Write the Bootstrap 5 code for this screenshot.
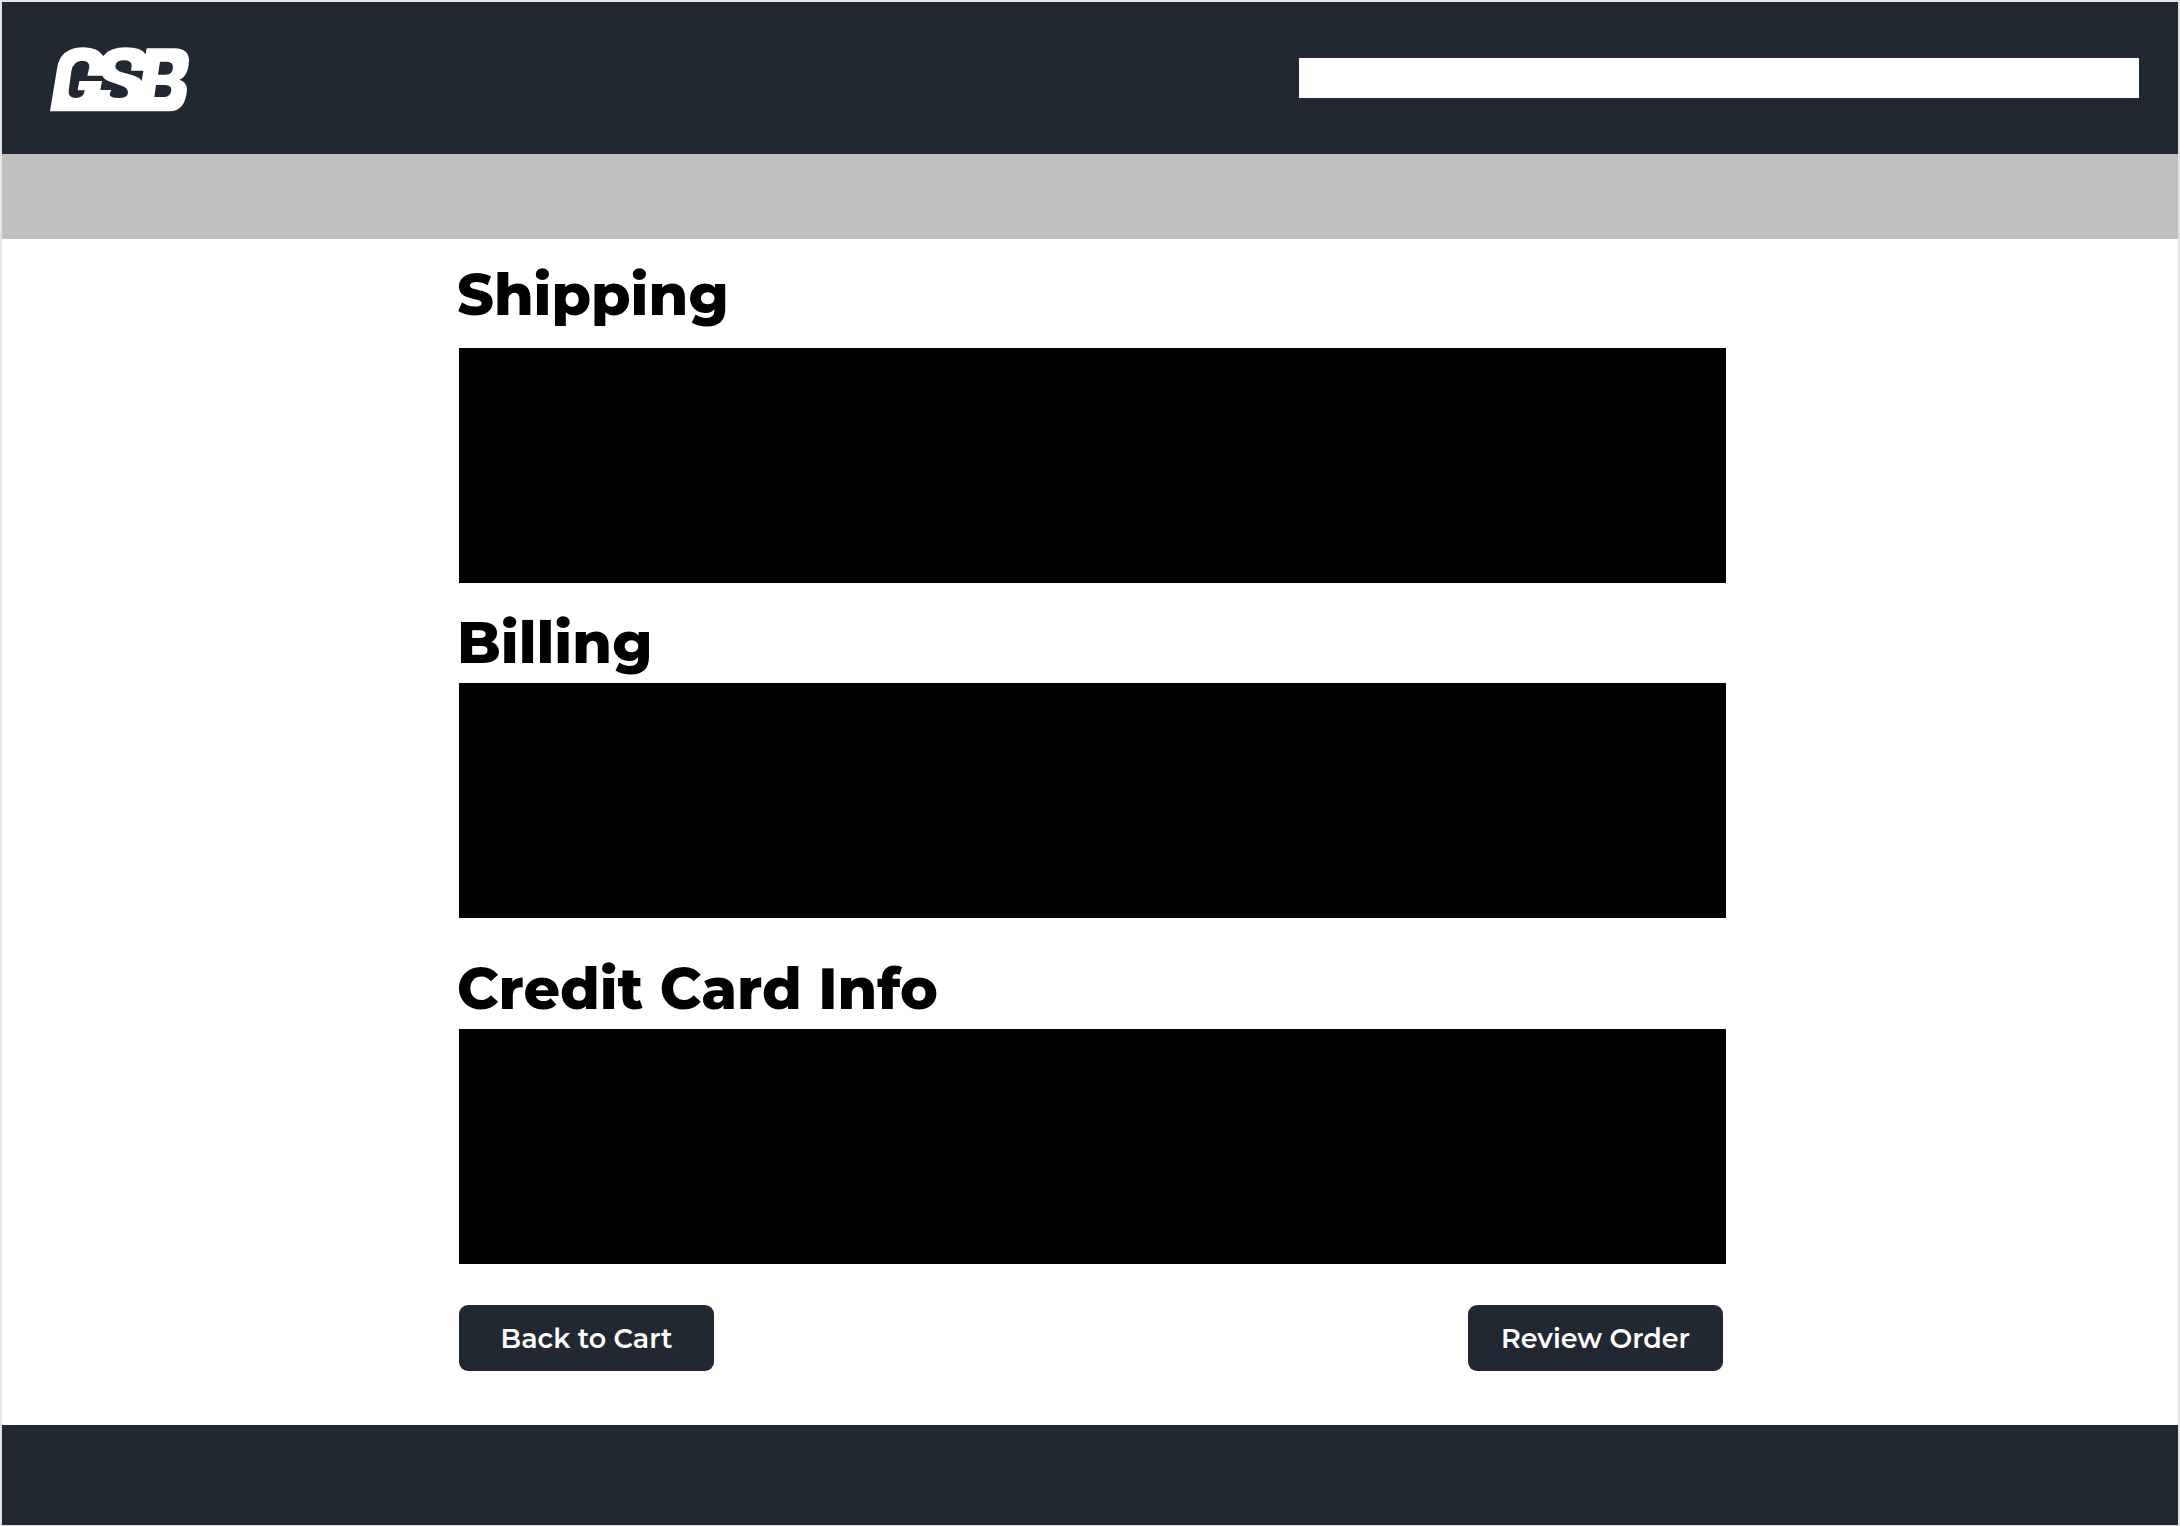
<!DOCTYPE html>
<html lang="en">
<head>
<meta charset="utf-8">
<meta name="viewport" content="width=device-width, initial-scale=1">
<title>GSB Checkout</title>
<link href="https://cdn.jsdelivr.net/npm/bootstrap@5.3.0/dist/css/bootstrap.min.css" rel="stylesheet">
<style>
  :root { --navy: #222831; }
  body { font-family: Montserrat, Inter, sans-serif; color: #000; background: #fff; }
  .page-frame { border: 2px solid #e2e4e6; border-bottom-width: 1px; }
  .site-header { background: var(--navy); height: 152px; padding: 0 39px 0 48px; }
  .brand-link { padding-top: 2px; }
  .search-box { width: 840px; height: 40px; border: 0; border-radius: 0; }
  .sub-bar { background: #c0c0c0; height: 85px; }
  .checkout { padding-left: 5px; }
  .checkout-inner { max-width: 1267px; }
  .section-title { font-size: 57px; line-height: 64px; font-weight: 800; margin-left: -2px; }
  .section-title.first-title { margin-bottom: 21px; }
  .billing-section { padding-top: 28px; }
  .card-section { padding-top: 39px; }
  .panel { height: 235px; background: #000; }
  .action-row { padding: 41px 3px 0 0; }
  .btn-navy { width: 255px; height: 66px; border: 0; border-radius: 9px; padding: 8px 12px 6px; font-size: 27px; font-weight: 600; line-height: 36px; --bs-btn-color: #fff; --bs-btn-bg: var(--navy); --bs-btn-hover-color: #fff; --bs-btn-hover-bg: #39424f; }
  .site-footer { background: var(--navy); height: 100px; }
</style>
</head>
<body>
<div class="page-frame d-flex flex-column min-vh-100">
  <header class="site-header d-flex align-items-center justify-content-between">
    <a class="brand-link" href="#" aria-label="GSB home">
      <svg class="d-block" width="140" height="65" viewBox="30 35 420 195" aria-hidden="true">
        <path fill="#fff" fill-rule="evenodd" d="M30 228L51 100Q60 36 132 36Q174 37 190 62Q208 36 258 36Q305 36 317 57L320 39H405Q447 40 447 76Q445 122 418 133Q441 140 441 162Q437 228 388 228Z
        M127 76Q148 76 148 95L142 121H187Q192 133 215 141L245 151Q264 157 264 172Q263 188 237 188Q208 188 209 175L214 164H181L186 137H118L113 165H134Q132 188 107 188Q84 187 86 166L94 108Q99 76 127 76Z
        M252 75Q276 75 275 92L273 106H310L305 137Q299 127 278 120L246 111Q225 104 226 91Q229 75 252 75Z
        M360 79H381Q400 80 399 97Q397 117 378 118H354Z
        M348 149H376Q395 150 394 164Q392 184 373 185H343Z"/>
      </svg>
    </a>
    <input class="search-box form-control" type="search" aria-label="Search">
  </header>
  <nav class="sub-bar" aria-label="Categories"></nav>

  <main class="checkout flex-grow-1">
    <div class="checkout-inner mx-auto">
      <section class="pt-4" aria-labelledby="shipping">
        <h1 class="section-title first-title" id="shipping">Shipping</h1>
        <div class="panel"></div>
      </section>
      <section class="billing-section" aria-labelledby="billing">
        <h2 class="section-title mb-2" id="billing">Billing</h2>
        <div class="panel"></div>
      </section>
      <section class="card-section" aria-labelledby="card-info">
        <h2 class="section-title mb-2" id="card-info">Credit Card Info</h2>
        <div class="panel"></div>
      </section>
      <div class="action-row d-flex justify-content-between">
        <button class="btn btn-navy" type="button">Back to Cart</button>
        <button class="btn btn-navy" type="button">Review Order</button>
      </div>
    </div>
  </main>

  <footer class="site-footer"></footer>
</div>
<script src="https://cdn.jsdelivr.net/npm/bootstrap@5.3.0/dist/js/bootstrap.bundle.min.js"></script>
</body>
</html>
